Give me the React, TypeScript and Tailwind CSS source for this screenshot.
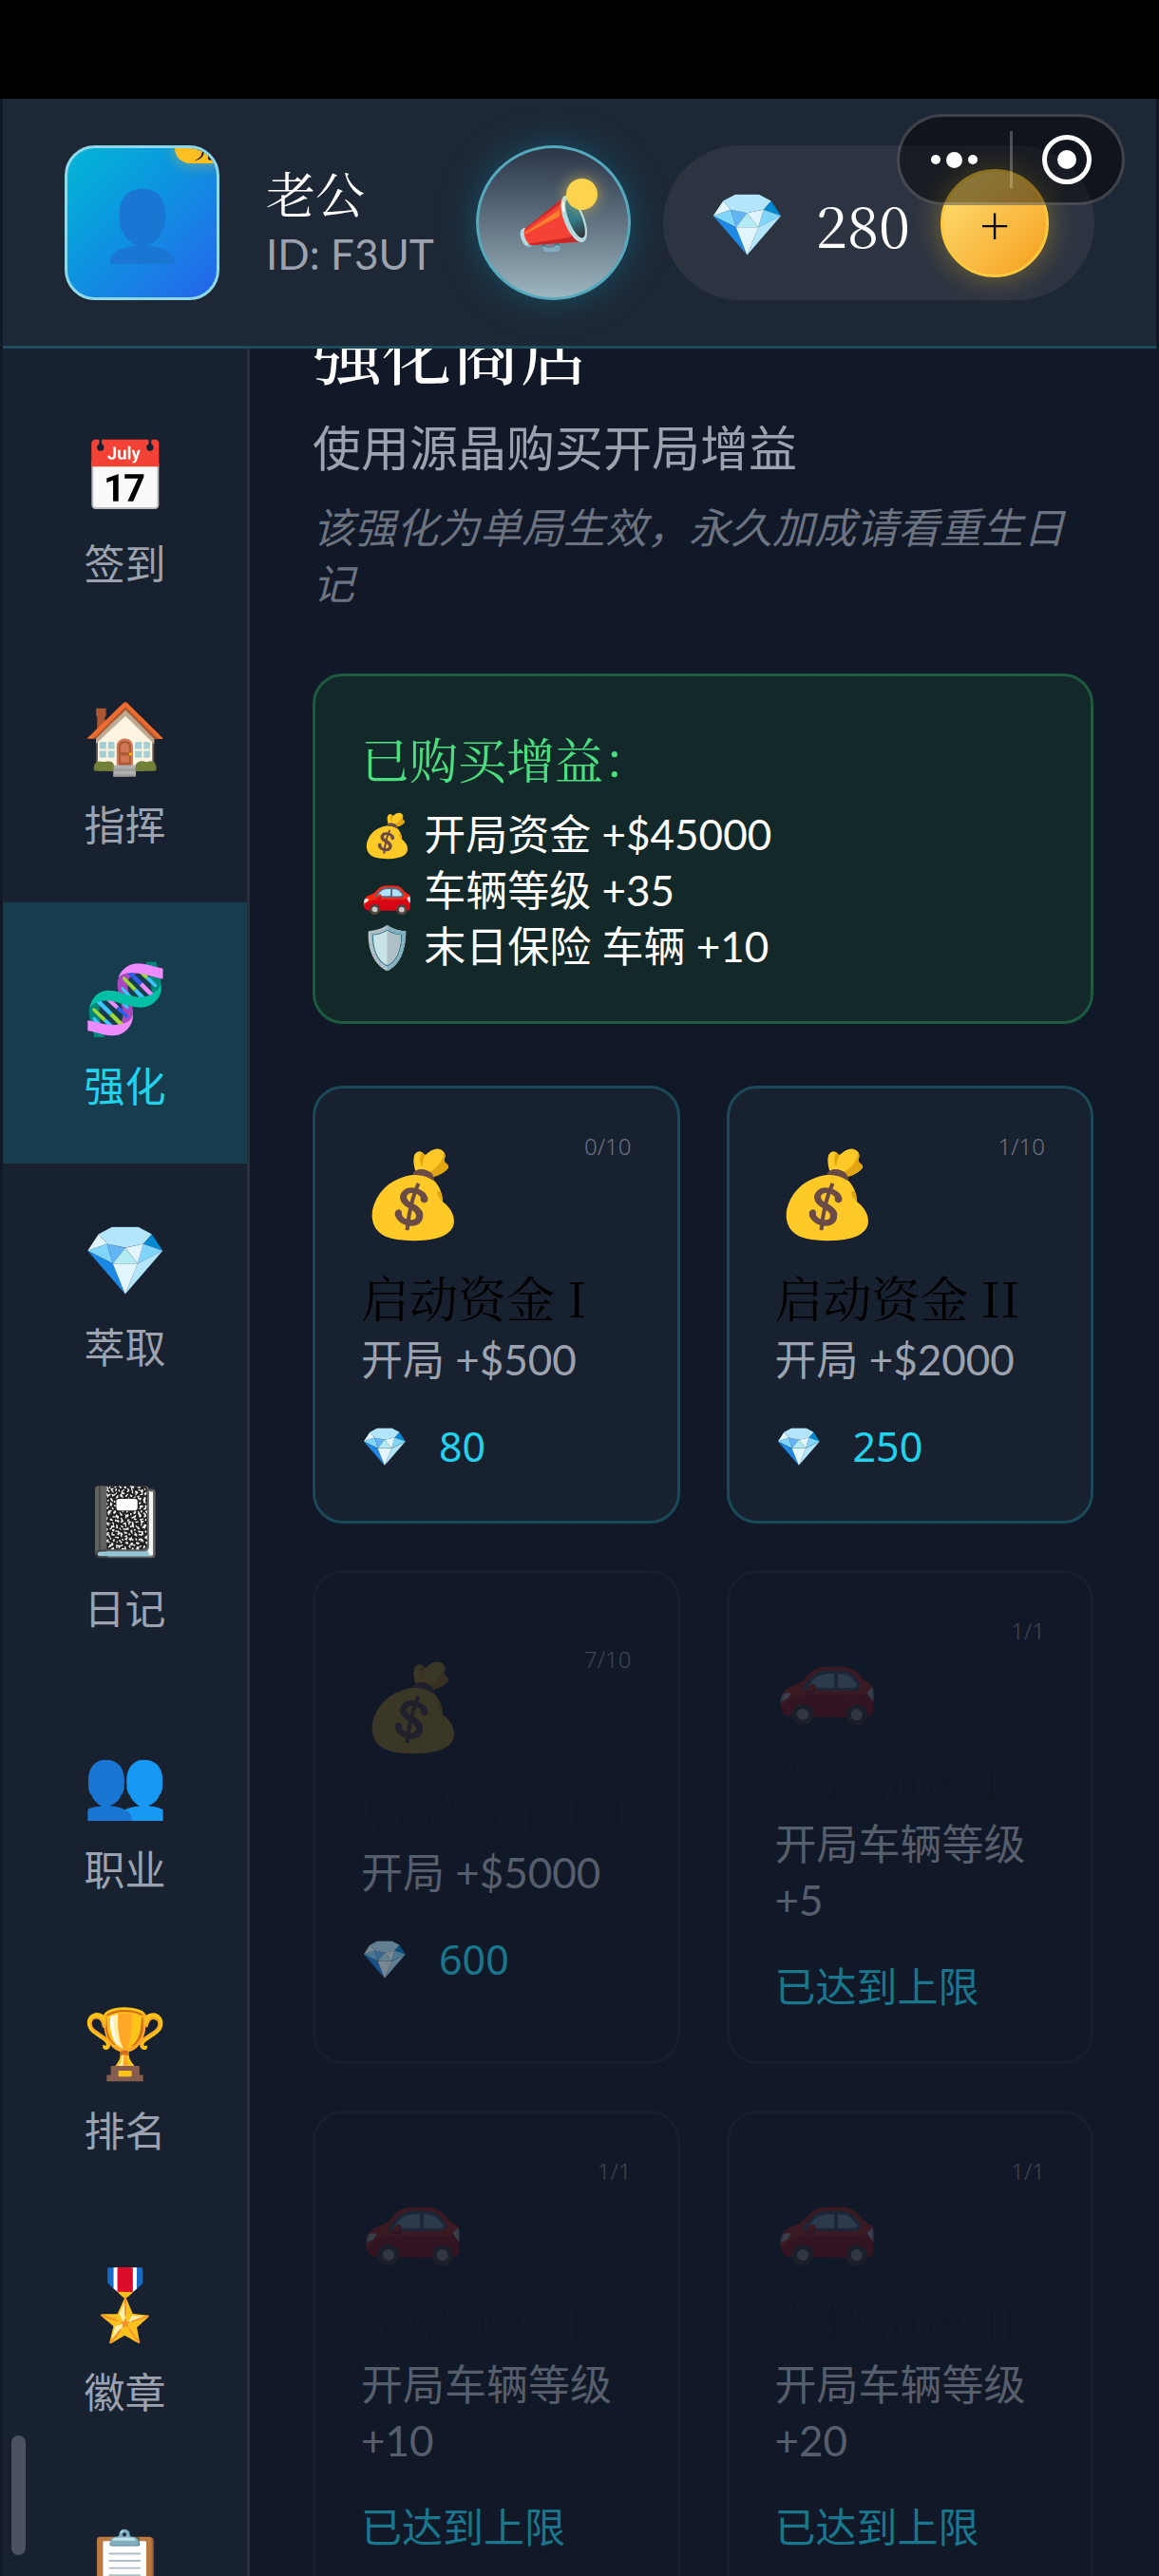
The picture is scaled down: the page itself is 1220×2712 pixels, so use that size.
import { useState } from 'react'
import clsx from 'clsx'

const sans = "font-[Lato,'Noto_Sans_CJK_SC',sans-serif]"
const serif = "font-['Noto_Serif_CJK_SC','Liberation_Serif','Noto_Sans_CJK_SC',serif]"

const navItems = [
  { icon: '📅', label: '签到' },
  { icon: '🏠', label: '指挥' },
  { icon: '🧬', label: '强化' },
  { icon: '💎', label: '萃取' },
  { icon: '📓', label: '日记' },
  { icon: '👥', label: '职业' },
  { icon: '🏆', label: '排名' },
  { icon: '🎖️', label: '徽章' },
  { icon: '📋', label: '任务' },
]

const owned = [
  { icon: '💰', text: '开局资金 +$45000' },
  { icon: '🚗', text: '车辆等级 +35' },
  { icon: '🛡️', text: '末日保险 车辆 +10' },
]

type Upgrade = { icon: string; name: string; desc: string; count: string; price?: number; locked?: boolean }

const upgrades: Upgrade[] = [
  { icon: '💰', name: '启动资金 I', desc: '开局 +$500', count: '0/10', price: 80 },
  { icon: '💰', name: '启动资金 II', desc: '开局 +$2000', count: '1/10', price: 250 },
  { icon: '💰', name: '启动资金 III', desc: '开局 +$5000', count: '7/10', price: 600, locked: true },
  { icon: '🚗', name: '车辆预热 I', desc: '开局车辆等级 +5', count: '1/1', locked: true },
  { icon: '🚗', name: '车辆预热 II', desc: '开局车辆等级 +10', count: '1/1', locked: true },
  { icon: '🚗', name: '车辆预热 III', desc: '开局车辆等级 +20', count: '1/1', locked: true },
]

function Capsule() {
  return (
    <div className="absolute top-[120px] right-9 flex h-24 w-60 items-center rounded-full border-[3px] border-white/20 bg-black/45">
      <button aria-label="更多" className="flex flex-1 items-center justify-center gap-1.5">
        <span className="size-2.5 rounded-full bg-white" />
        <span className="size-[17px] rounded-full bg-white" />
        <span className="size-2.5 rounded-full bg-white" />
      </button>
      <span className="h-[60px] w-[3px] bg-white/25" />
      <button aria-label="关闭" className="flex flex-1 items-center justify-center">
        <span className="flex size-[52px] items-center justify-center rounded-full border-[5px] border-white">
          <span className="size-5 rounded-full bg-white" />
        </span>
      </button>
    </div>
  )
}

function Header() {
  return (
    <header className="flex items-center border-b-[3px] border-[#1c4d5c] bg-[#1e2735] px-[65px] pt-[49px] pb-12">
      <button aria-label="头像" className="relative flex size-[163px] shrink-0 items-center justify-center overflow-hidden rounded-[32px] border-[3px] border-[#8fd8ea] bg-linear-to-br from-[#06b6d4] to-[#2563eb] text-[72px] leading-none">
        👤
        <span className={clsx(serif, 'absolute -top-4 -right-12 rounded-2xl bg-[#fbbf24] px-5 text-[26px] leading-8 text-black shadow-[0_0_16px_#fbbf2480]')}>充值</span>
      </button>
      <div className="ml-[49px] flex flex-col">
        <span className={clsx(serif, 'text-[52px] leading-[64px] text-white')}>老公</span>
        <span className="text-[44px] leading-[64px] text-[#9ca3af]">ID: F3UT</span>
      </div>
      <div className="ml-auto flex items-center gap-[34px]">
        <button aria-label="公告" className="relative flex size-[163px] items-center justify-center rounded-full border-[3px] border-[#55a9bd] bg-linear-to-b from-[#2b3648] to-[#9db6c0] text-[64px] leading-none shadow-[0_0_40px_#0891b266]">
          📣
          <span className="absolute top-8 right-8 size-[33px] rounded-full bg-[#fcd34d] shadow-[0_0_16px_#fcd34d99]" />
        </button>
        <div className="flex h-[163px] items-center rounded-full bg-[#2c3442] px-12">
          <span className="text-[65px] leading-none">💎</span>
          <span className={clsx(serif, 'ml-8 text-[60px] leading-[80px] text-white')}>280</span>
          <button aria-label="充值" className={clsx(serif, 'ml-8 flex size-[114px] items-center justify-center rounded-full border-[3px] border-[#fcc93f] bg-linear-to-br from-[#fde272] to-[#f59e0b] text-[52px] leading-none text-black shadow-[0_0_32px_#fbbf2466]')}>+</button>
        </div>
      </div>
    </header>
  )
}

function Sidebar({ active, onSelect }: { active: string; onSelect: (label: string) => void }) {
  return (
    <nav className="relative w-[260px] shrink-0 overflow-hidden border-r-[3px] border-[#28303e] bg-[#18212f] pt-[33px]">
      {navItems.map(item => (
        <button
          key={item.label}
          onClick={() => onSelect(item.label)}
          className={clsx(
            'flex h-[275px] w-full flex-col items-center gap-4 pt-[50px]',
            active === item.label ? 'bg-[#163c4e] text-[#22d3ee]' : 'text-[#9ca3af]',
          )}
        >
          <span className="text-[72px] leading-[98px]">{item.icon}</span>
          <span className="text-[43px] leading-[59px]">{item.label}</span>
        </button>
      ))}
      <span className="absolute bottom-[22px] left-[9px] h-[126px] w-[15px] rounded-full bg-[#4b5262]" />
    </nav>
  )
}

function UpgradeCard({ item }: { item: Upgrade }) {
  return (
    <button
      disabled={item.locked}
      className={clsx(
        'flex flex-col justify-center rounded-[32px] border-[3px] px-12 py-[49px] text-left',
        item.locked ? 'border-[#171e2d]' : 'border-[#1a4a5a] bg-[#18212f]',
      )}
    >
      <span className={clsx('flex items-start justify-between', item.locked && 'opacity-50')}>
        <span className={clsx('text-[88px] leading-[118px]', item.locked && 'opacity-35')}>{item.icon}</span>
        <span className="font-['Noto_Sans'] text-[24px] leading-[24px] font-light text-[#6b7280]">{item.count}</span>
      </span>
      <span className={clsx(serif, 'mt-5 mb-1 text-[51px] leading-[65px] text-black', item.locked && 'opacity-5')}>{item.name}</span>
      <span className={clsx('text-[44px] leading-[59px] text-[#9ca3af]', item.locked && 'opacity-50')}>{item.desc}</span>
      <span className={clsx('mt-8 flex items-center gap-8 text-[43px] leading-[59px] text-[#22d3ee]', item.locked && 'opacity-50')}>
        {item.price ? (
          <>
            <span className="text-[40px]">💎</span>
            <span className="font-['Noto_Sans']">{item.price}</span>
          </>
        ) : '已达到上限'}
      </span>
    </button>
  )
}

export default function App() {
  const [active, setActive] = useState('强化')

  return (
    <div className={clsx(sans, 'relative flex h-screen flex-col overflow-hidden bg-[#111827]')}>
      <div className="h-[104px] shrink-0 bg-black" />
      <div className="flex min-h-0 flex-1 flex-col px-[3px]">
        <Header />
        <div className="flex min-h-0 flex-1">
          <Sidebar active={active} onSelect={setActive} />
          <main className="min-w-0 flex-1 overflow-hidden px-[66px]">
            <h1 className={clsx(serif, '-mt-[51px] text-[73px] leading-[104px] font-medium text-white')}>强化商店</h1>
            <p className="mt-[18px] text-[51px] leading-[68px] text-[#9ca3af]">使用源晶购买开局增益</p>
            <p className="mt-5 text-[44px] leading-[59px] text-[#6b7280] italic">该强化为单局生效，永久加成请看重生日记</p>
            <section className="mt-[65px] rounded-[32px] border-[3px] border-[#1d5a3f] bg-[#132929] px-12 py-[49px]">
              <h2 className={clsx(serif, 'text-[51px] leading-[74px] text-[#4ade80]')}>已购买增益：</h2>
              <ul className="mt-3.5 text-[44px] leading-[59px] text-white">
                {owned.map(o => (
                  <li key={o.text}><span className="leading-none">{o.icon}</span> {o.text}</li>
                ))}
              </ul>
            </section>
            <div className="mt-[65px] grid grid-cols-2 gap-[49px]">
              {upgrades.map(u => <UpgradeCard key={u.name} item={u} />)}
            </div>
          </main>
        </div>
      </div>
      <Capsule />
    </div>
  )
}
